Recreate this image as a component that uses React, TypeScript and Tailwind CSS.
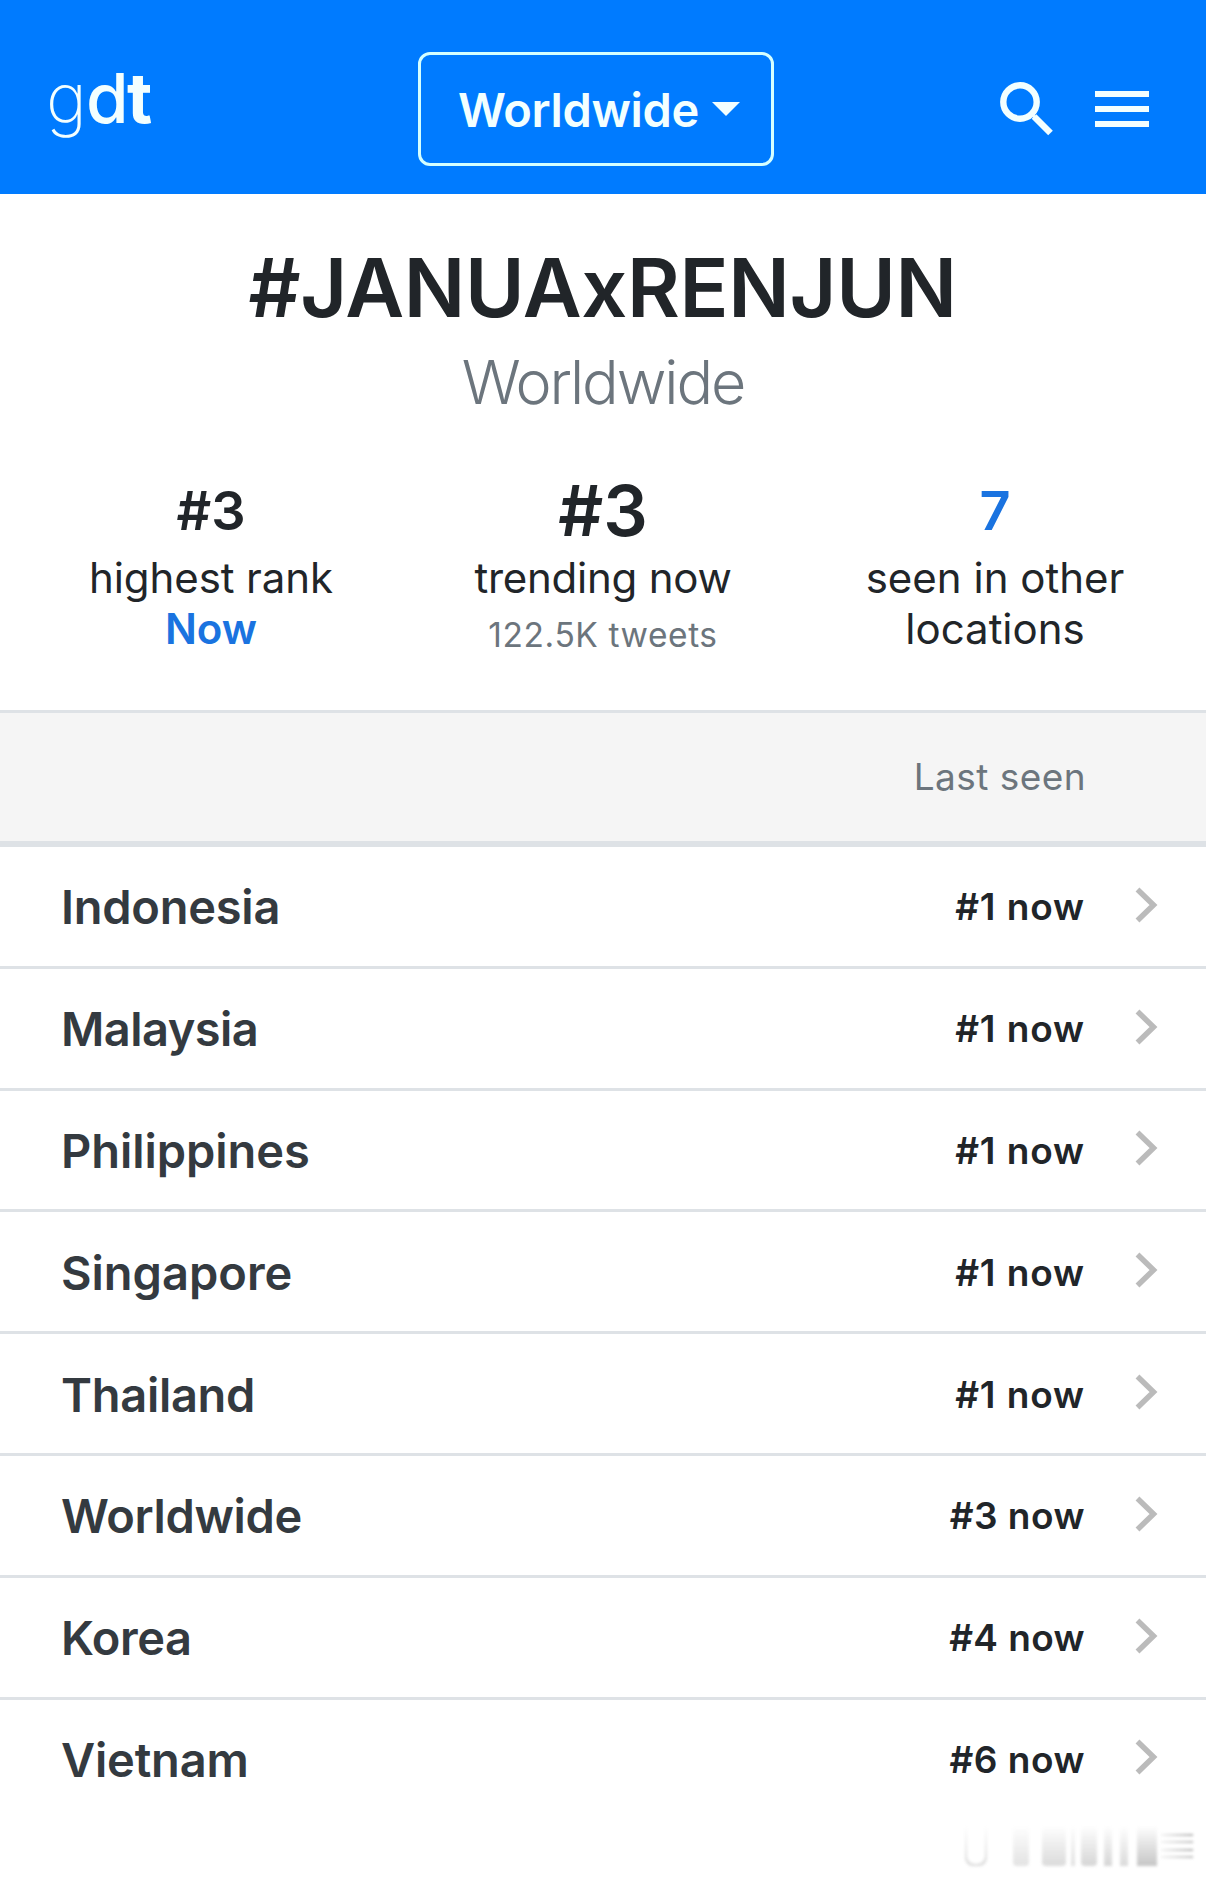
import React from "react";

type Location = { name: string; rank: string; nameSpacing: string; rankSpacing: string };

const locations: Location[] = [
  { name: "Indonesia", rank: "#1 now", nameSpacing: "tracking-[-0.25px]", rankSpacing: "tracking-[0.9px]" },
  { name: "Malaysia", rank: "#1 now", nameSpacing: "tracking-[-0.55px]", rankSpacing: "tracking-[0.9px]" },
  { name: "Philippines", rank: "#1 now", nameSpacing: "tracking-[-0.05px]", rankSpacing: "tracking-[0.9px]" },
  { name: "Singapore", rank: "#1 now", nameSpacing: "tracking-[0px]", rankSpacing: "tracking-[0.9px]" },
  { name: "Thailand", rank: "#1 now", nameSpacing: "tracking-[-0.3px]", rankSpacing: "tracking-[0.9px]" },
  { name: "Worldwide", rank: "#3 now", nameSpacing: "tracking-[-0.35px]", rankSpacing: "tracking-[0.5px]" },
  { name: "Korea", rank: "#4 now", nameSpacing: "tracking-[-0.4px]", rankSpacing: "tracking-[0.4px]" },
  { name: "Vietnam", rank: "#6 now", nameSpacing: "tracking-[-0.2px]", rankSpacing: "tracking-[0.5px]" },
];

function Header() {
  return (
    <header className="flex h-[194px] items-center bg-[#007bff] pt-6 pr-[57px] pl-[46px] text-[#f3ffff]">
      <a className="flex w-[372px] pb-[22px] text-[69px] leading-[96px]">
        <span className="w-[40px] font-extralight">g</span>
        <span className="w-[41px] font-medium">d</span>
        <span className="font-bold">t</span>
      </a>
      <button className="flex h-[114px] w-[356px] items-center rounded-xl border-3 border-[#d5ffff] pl-[37px] text-[47px] leading-none font-semibold tracking-[-0.35px]">
        Worldwide
        <svg className="ml-[13px]" width="28" height="14" viewBox="0 0 28 14" fill="currentColor">
          <path d="M0 0H28L14 14Z" />
        </svg>
      </button>
      <div className="ml-auto flex items-center gap-[41px]">
        <svg width="54" height="54" viewBox="0 0 54 54" fill="none" stroke="currentColor">
          <circle cx="20" cy="20" r="16.7" strokeWidth="6.4" />
          <path d="M34 34.500L50.500 51" strokeWidth="6.500" />
          <path d="M31 31.500L35 35.500" strokeWidth="3" />
        </svg>
        <svg width="54" height="37" viewBox="0 0 54 37" fill="currentColor">
          <path d="M0 0H54V6H0ZM0 15H54V21H0ZM0 30H54V36H0Z" />
        </svg>
      </div>
    </header>
  );
}

function Summary() {
  return (
    <section className="h-[516px] pt-11 text-center text-[#212529]">
      <h1 className="text-[81px] leading-[100px] font-semibold tracking-[-0.32px] -indent-[1px]">#JANUAxRENJUN</h1>
      <h2 className="text-[61px] leading-[88px] font-[340] tracking-[-2.1px] text-[#6c757d]">Worldwide</h2>
      <div className="grid grid-cols-3 px-[15px] pt-[42px] text-[42px] leading-[51px]">
        <div>
          <div className="pt-px text-[54px] leading-[84px] font-semibold">#3</div>
          <div className="-mt-px tracking-[-0.09px]">highest rank</div>
          <div className="font-semibold text-[#1a73e0]">Now</div>
        </div>
        <div>
          <div className="pt-px text-[70px] leading-[84px] font-semibold">#3</div>
          <div className="-mt-px tracking-[-0.24px]">trending now</div>
          <div className="text-[33.5px] leading-[64px] tracking-[0.59px] text-[#6c757d]">122.5K tweets</div>
        </div>
        <div>
          <div className="pt-px text-[54px] leading-[84px] font-semibold text-[#1a73e0]">7</div>
          <div className="-mt-px">seen in other</div>
          <div>locations</div>
        </div>
      </div>
    </section>
  );
}

function Row({ name, rank, nameSpacing, rankSpacing }: Location) {
  return (
    <li className="flex h-[121.8px] items-center border-b-3 border-[#dee2e6] pt-px pr-[48px] pl-[61px] last:border-transparent">
      <span className={`pt-px text-[47px] leading-[60px] font-semibold text-[#343a40] ${nameSpacing}`}>{name}</span>
      <span className={`ml-auto pt-px text-[37px] leading-[60px] font-semibold text-[#212529] ${rankSpacing}`}>{rank}</span>
      <svg className="mb-[4px] ml-[50px]" width="23" height="36" viewBox="0 0 23 36" fill="none" stroke="#bbbbbb" strokeWidth="5.500">
        <path d="M2.500 2.500L18.500 18L2.500 33.500" />
      </svg>
    </li>
  );
}

function Smudge() {
  return (
    <div className="absolute top-[1826px] right-[11px] flex h-10 w-[230px] items-stretch opacity-80 blur-[1.5px]">
      <div className="w-[22px] rounded-b-lg bg-linear-to-b from-white to-[#d0d0d0] px-0.5 pb-0.5">
        <div className="h-full rounded-b-lg bg-white" />
      </div>
      <div className="ml-[26px] w-4 rounded-b bg-linear-to-b from-white to-[#dcdcdc]" />
      <div className="ml-[13px] w-6 rounded-b bg-linear-to-b from-white to-[#d2d2d2]" />
      <div className="ml-[5px] w-1 bg-linear-to-b from-white to-[#dadada]" />
      <div className="ml-[6px] w-4 rounded-b bg-linear-to-b from-white to-[#cccccc]" />
      <div className="ml-[7px] w-2 bg-linear-to-b from-white to-[#cccccc]" />
      <div className="ml-[8px] w-2 bg-linear-to-b from-white to-[#d2d2d2]" />
      <div className="ml-[9px] w-5 bg-linear-to-b from-white to-[#b8b8b8]" />
      <div className="my-2 ml-[4px] flex w-8 flex-col justify-between">
        <div className="h-0.5 bg-linear-to-r from-[#eeeeee] to-[#999999]" />
        <div className="h-0.5 bg-linear-to-r from-[#eeeeee] to-[#aaaaaa]" />
        <div className="h-0.5 bg-linear-to-r from-[#eeeeee] to-[#999999]" />
        <div className="h-0.5 bg-linear-to-r from-[#eeeeee] to-[#aaaaaa]" />
      </div>
    </div>
  );
}

export default function App() {
  return (
    <div className="relative h-[1878px] w-[1206px] overflow-hidden bg-white font-['Inter',sans-serif]">
      <Header />
      <Summary />
      <div className="flex h-[137px] items-center justify-end border-t-3 border-b-6 border-[#dee2e6] bg-[#f5f5f5] pr-[120px] text-[37px] leading-[60px] tracking-[0.45px] text-[#6c757d]">
        Last seen
      </div>
      <ul>
        {locations.map((location) => (
          <Row key={location.name} {...location} />
        ))}
      </ul>
      <Smudge />
    </div>
  );
}
